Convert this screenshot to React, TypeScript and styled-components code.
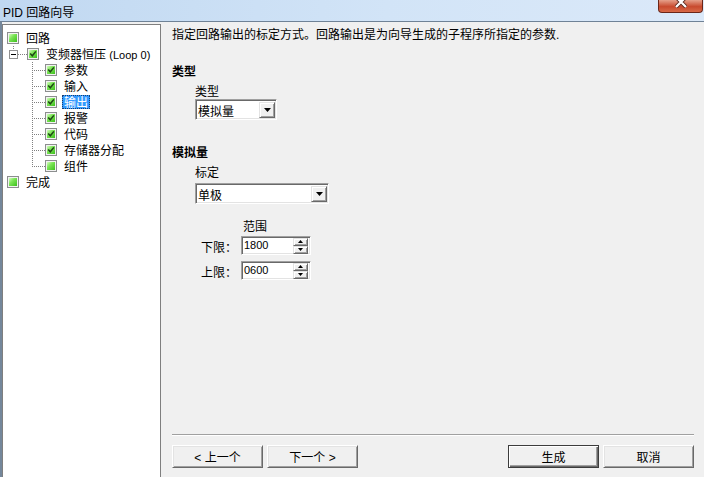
import styled, { createGlobalStyle, css } from "styled-components";

const FONT = `"Liberation Sans", "Noto Sans CJK SC", sans-serif`;

const GlobalStyle = createGlobalStyle`
  html, body {
    margin: 0;
    padding: 0;
    background: #f0f0f0;
    overflow: hidden;
  }

  body {
    font-family: ${FONT};
    font-size: 12px;
    color: #000;
  }
`;

// Noto CJK sits high in its line box; a taller line box inside a fixed height drops it to where the bitmap font was
const textLine = css`
  height: 14px;
  line-height: 18px;
  white-space: nowrap;
`;

const Window = styled.div`
  width: 704px;
  height: 477px;
  display: flex;
  flex-direction: column;
  overflow: hidden;
  background: #f0f0f0;
`;

const TitleBar = styled.div`
  height: 21px;
  flex: none;
  display: flex;
  align-items: center;
  padding-left: 3px;
  background: linear-gradient(to right, #c0d8f1, #d2e4f7 55%, #dbe9f9);
  border-bottom: 1px solid #6f8296;
`;

const Title = styled.span`
  ${textLine}
`;

const CloseButton = styled.div`
  margin-left: auto;
  margin-right: 1px;
  align-self: flex-start;
  width: 45px;
  height: 13px;
  box-sizing: border-box;
  border: 1px solid #6b2618;
  border-top: none;
  border-radius: 0 0 4px 4px;
  background: linear-gradient(#e6a08a, #c84a2e 55%, #d86a48);
  display: flex;
  justify-content: center;
  align-items: flex-start;
  overflow: hidden;
`;

const Body = styled.div`
  flex: 1;
  min-height: 0;
  display: flex;
  padding-top: 2px;
  border-left: 2px solid #74879b;
`;

const TreePanel = styled.div`
  width: 159px;
  flex: none;
  box-sizing: border-box;
  background: #fff;
  border: 1px solid #7f7f7f;
  border-bottom: none;
  padding-top: 5px;
`;

const TreeRow = styled.div<{ $indent: number }>`
  height: 16px;
  display: flex;
  align-items: center;
  padding-left: ${(p) => p.$indent}px;
  white-space: nowrap;
`;

const Box = styled.span`
  width: 12px;
  height: 12px;
  flex: none;
  box-sizing: border-box;
  border: 1px solid #8c8e8e;
  background: #f2f2f2;
  padding: 1px;
  display: flex;
`;

const BoxFill = styled.span`
  flex: 1;
  display: flex;
  align-items: center;
  justify-content: center;
  background: linear-gradient(135deg, #d6fcc2 0%, #7ce556 40%, #3dbf1e 100%);
`;

const TreeLabel = styled.span<{ $selected?: boolean }>`
  margin-left: 5px;
  padding: 0 1px;
  height: 12px;
  line-height: 14px;
  border: 1px dotted ${(p) => (p.$selected ? "#1b3f6e" : "transparent")};
  background: ${(p) => (p.$selected ? "#3399ff" : "transparent")};
  color: ${(p) => (p.$selected ? "#fff" : "#000")};
`;

const Latin = styled.span`
  font-size: 11px;
`;

const Content = styled.div`
  flex: 1;
  min-width: 0;
  display: flex;
  flex-direction: column;
  padding: 2px 10px 9px 11px;
`;

const Intro = styled.div`
  ${textLine}
`;

const SectionTitle = styled.div<{ $top: number }>`
  ${textLine}
  font-weight: bold;
  margin-top: ${(p) => p.$top}px;
`;

const Field = styled.div`
  padding-left: 23px;
  display: flex;
  flex-direction: column;
  align-items: flex-start;
`;

const FieldLabel = styled.div<{ $top: number; $left?: number }>`
  ${textLine}
  margin-top: ${(p) => p.$top}px;
  margin-left: ${(p) => p.$left ?? 0}px;
`;

const Combo = styled.div<{ $width: number; $top: number }>`
  width: ${(p) => p.$width}px;
  height: 21px;
  margin-top: ${(p) => p.$top}px;
  box-sizing: border-box;
  display: flex;
  align-items: center;
  background: #fff;
  border: 1px solid;
  border-color: #a0a0a0 #fff #fff #a0a0a0;
  box-shadow: inset 1px 1px #696969, inset -1px -1px #e3e3e3;
  padding: 1px 1px 1px 2px;
`;

const ComboValue = styled.span`
  ${textLine}
  flex: 1;
`;

const RaisedButton = styled.span<{ $w: number; $h: number }>`
  width: ${(p) => p.$w}px;
  height: ${(p) => p.$h}px;
  flex: none;
  box-sizing: border-box;
  display: flex;
  align-items: center;
  justify-content: center;
  background: #f0f0f0;
  border: 1px solid;
  border-color: #e3e3e3 #696969 #696969 #e3e3e3;
  box-shadow: inset 1px 1px #fff, inset -1px -1px #a0a0a0;
`;

const SpinRow = styled.div<{ $top: number }>`
  display: flex;
  align-items: center;
  margin-top: ${(p) => p.$top}px;
  margin-left: 6px;
`;

const SpinLabel = styled.span`
  ${textLine}
  width: 36px;
  margin-right: 4px;
`;

const Spin = styled.div`
  width: 70px;
  height: 19px;
  box-sizing: border-box;
  display: flex;
  align-items: center;
  background: #fff;
  border: 1px solid;
  border-color: #a0a0a0 #fff #fff #a0a0a0;
  box-shadow: inset 1px 1px #696969, inset -1px -1px #e3e3e3;
  padding: 1px 1px 1px 2px;
`;

const SpinValue = styled.span`
  flex: 1;
  font-size: 11px;
  line-height: 13px;
`;

const SpinButtons = styled.span`
  display: flex;
  flex-direction: column;
  margin-right: 1px;
`;

const Footer = styled.div`
  margin-top: auto;
`;

const Separator = styled.div`
  border-top: 1px solid #a0a0a0;
  border-bottom: 1px solid #fff;
`;

const ButtonBar = styled.div`
  display: flex;
  gap: 4px;
  margin-top: 9px;
`;

const Spacer = styled.div`
  flex: 1;
`;

const Button = styled.button<{ $default?: boolean }>`
  width: 91px;
  height: 23px;
  padding: 0;
  font-family: ${FONT};
  font-size: 12px;
  color: #000;
  background: #f0f0f0;
  border: 1px solid;
  border-color: ${(p) =>
    p.$default ? "#3c3c3c" : "#fff #696969 #696969 #fff"};
  box-shadow: ${(p) =>
    p.$default
      ? "inset 1px 1px #fff, inset -1px -1px #696969, inset -2px -2px #a0a0a0"
      : "inset 1px 1px #e3e3e3, inset -1px -1px #a0a0a0"};
`;

const DOT = "#808080";

const Dots = ({ x1, x2, y1, y2 }: { x1: number; x2: number; y1: number; y2: number }) => {
  const rects = [];
  if (y1 === y2) {
    for (let x = x1; x <= x2; x += 2) rects.push(<rect key={x} x={x} y={y1} width={1} height={1} fill={DOT} />);
  } else {
    for (let y = y1; y <= y2; y += 2) rects.push(<rect key={y} x={x1} y={y} width={1} height={1} fill={DOT} />);
  }
  return <>{rects}</>;
};

const Check = ({ checked }: { checked?: boolean }) => (
  <Box>
    <BoxFill>
      {checked && (
        <svg width="8" height="8" viewBox="0 0 8 8">
          <path d="M1.2 3.6 L3.3 5.8 L6.9 1.4" fill="none" stroke="#1f4716" strokeWidth="1.5" />
        </svg>
      )}
    </BoxFill>
  </Box>
);

const Expander = () => (
  <svg width="24" height="16" viewBox="0 0 24 16" style={{ flex: "none" }} shapeRendering="crispEdges">
    <Dots x1={10} x2={10} y1={0} y2={2} />
    <rect x="6.5" y="4.5" width="8" height="8" fill="#fff" stroke="#919191" />
    <rect x="8" y="8" width="5" height="1" fill="#000" />
    <Dots x1={15} x2={23} y1={8} y2={8} />
  </svg>
);

const Branch = ({ last }: { last?: boolean }) => (
  <svg width="42" height="16" viewBox="0 0 42 16" style={{ flex: "none" }} shapeRendering="crispEdges">
    <Dots x1={29} x2={29} y1={0} y2={last ? 8 : 15} />
    <Dots x1={31} x2={41} y1={8} y2={8} />
  </svg>
);

const Arrow = ({ up, small }: { up?: boolean; small?: boolean }) => {
  const w = small ? 5 : 7;
  const h = small ? 3 : 4;
  const d = up ? `M0 ${h} L${w / 2} 0 L${w} ${h} Z` : `M0 0 L${w} 0 L${w / 2} ${h} Z`;
  return (
    <svg width={w} height={h} viewBox={`0 0 ${w} ${h}`}>
      <path d={d} fill="#000" />
    </svg>
  );
};

const children = [
  { label: "参数", checked: true },
  { label: "输入", checked: true },
  { label: "输出", checked: true, selected: true },
  { label: "报警", checked: true },
  { label: "代码", checked: true },
  { label: "存储器分配", checked: true },
  { label: "组件", checked: false },
];

const SpinField = ({ label, value, top }: { label: string; value: string; top: number }) => (
  <SpinRow $top={top}>
    <SpinLabel>{label}</SpinLabel>
    <Spin>
      <SpinValue>{value}</SpinValue>
      <SpinButtons>
        <RaisedButton $w={15} $h={8}>
          <Arrow up small />
        </RaisedButton>
        <RaisedButton $w={15} $h={8}>
          <Arrow small />
        </RaisedButton>
      </SpinButtons>
    </Spin>
  </SpinRow>
);

export default function App() {
  return (
    <>
      <GlobalStyle />
      <Window>
        <TitleBar>
          <Title>PID 回路向导</Title>
          <CloseButton>
            <svg width="12" height="8" viewBox="0 0 12 8">
              <path d="M1 -3 L11 7 M11 -3 L1 7" stroke="#5a2a20" strokeWidth="4" />
              <path d="M1 -3 L11 7 M11 -3 L1 7" stroke="#fff" strokeWidth="2.2" />
            </svg>
          </CloseButton>
        </TitleBar>
        <Body>
          <TreePanel>
            <TreeRow $indent={4}>
              <Check />
              <TreeLabel>回路</TreeLabel>
            </TreeRow>
            <TreeRow $indent={0}>
              <Expander />
              <Check checked />
              <TreeLabel>
                变频器恒压 <Latin>(Loop 0)</Latin>
              </TreeLabel>
            </TreeRow>
            {children.map((c, i) => (
              <TreeRow key={c.label} $indent={0}>
                <Branch last={i === children.length - 1} />
                <Check checked={c.checked} />
                <TreeLabel $selected={c.selected}>{c.label}</TreeLabel>
              </TreeRow>
            ))}
            <TreeRow $indent={4}>
              <Check />
              <TreeLabel>完成</TreeLabel>
            </TreeRow>
          </TreePanel>
          <Content>
            <Intro>指定回路输出的标定方式。回路输出是为向导生成的子程序所指定的参数.</Intro>
            <SectionTitle $top={23}>类型</SectionTitle>
            <Field>
              <FieldLabel $top={6}>类型</FieldLabel>
              <Combo $width={82} $top={2}>
                <ComboValue>模拟量</ComboValue>
                <RaisedButton $w={16} $h={16}>
                  <Arrow />
                </RaisedButton>
              </Combo>
            </Field>
            <SectionTitle $top={24}>模拟量</SectionTitle>
            <Field>
              <FieldLabel $top={6}>标定</FieldLabel>
              <Combo $width={134} $top={5}>
                <ComboValue>单极</ComboValue>
                <RaisedButton $w={16} $h={16}>
                  <Arrow />
                </RaisedButton>
              </Combo>
              <FieldLabel $top={14} $left={48}>
                范围
              </FieldLabel>
              <SpinField label="下限：" value="1800" top={4} />
              <SpinField label="上限：" value="0600" top={6} />
            </Field>
            <Footer>
              <Separator />
              <ButtonBar>
                <Button>&lt; 上一个</Button>
                <Button>下一个 &gt;</Button>
                <Spacer />
                <Button $default>生成</Button>
                <Button>取消</Button>
              </ButtonBar>
            </Footer>
          </Content>
        </Body>
      </Window>
    </>
  );
}
